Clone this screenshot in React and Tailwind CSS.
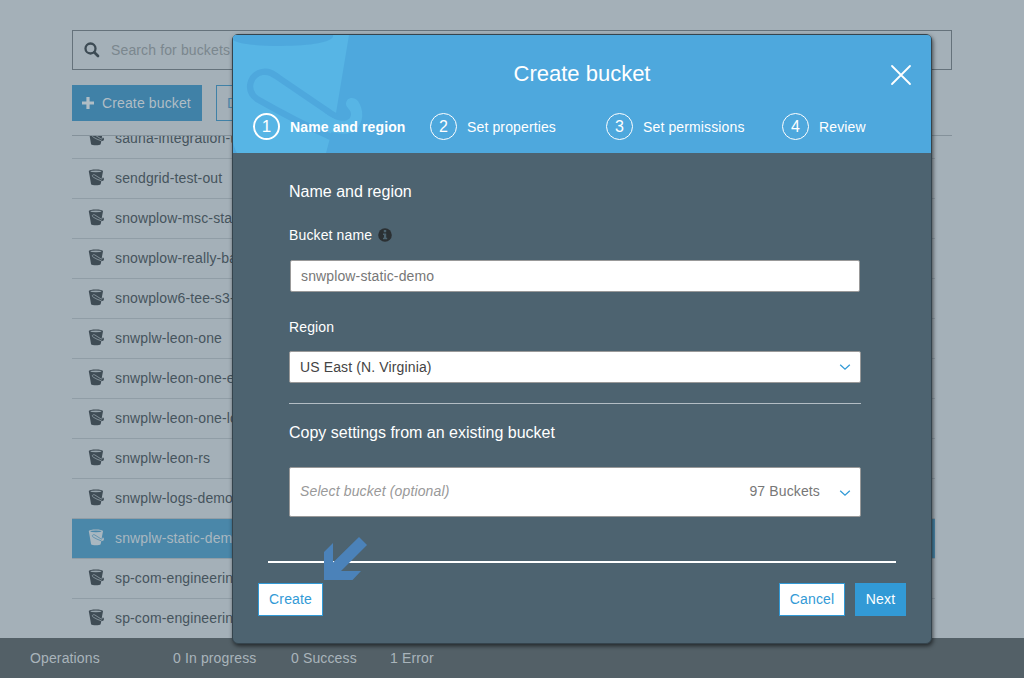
import React from "react";

const buckets = [
  "sauna-integration-test",
  "sendgrid-test-out",
  "snowplow-msc-stage",
  "snowplow-really-basic",
  "snowplow6-tee-s3-out",
  "snwplw-leon-one",
  "snwplw-leon-one-event",
  "snwplw-leon-one-logs",
  "snwplw-leon-rs",
  "snwplw-logs-demo",
  "snwplw-static-demo",
  "sp-com-engineering",
  "sp-com-engineering-a",
];

const steps = ["Name and region", "Set properties", "Set permissions", "Review"];

function BucketIcon({ selected }) {
  const fill = selected ? "#a9b7c0" : "#3f4c55";
  const line = selected ? "#4a87a9" : "#98a5ad";
  return (
    <svg width="17" height="17" viewBox="0 0 17 17" className="shrink-0">
      <path d="M0.8 2.2 C0.8 0 15 0 15 2.2 L13.7 9.3 C14.6 10.1 15 9.2 14.5 8.6 C15.6 8 16.6 10.2 15.5 11.5 C14.9 12.1 14 12 13.4 11.8 L12.6 15.2 C12 16.7 3.8 16.7 3.1 15.2 Z" fill={fill} />
      <ellipse cx="7.9" cy="2.3" rx="5.6" ry="0.85" fill={line} />
      <path d="M13.2 11.8 C10.5 11 7.5 9.5 5.3 8.2 C3.4 6.9 4.8 4.9 6.9 6 L12.2 9.4 C12.9 9.9 13.5 10.2 14 10" fill="none" stroke={line} strokeWidth="0.75" />
    </svg>
  );
}

function Watermark() {
  return (
    <svg width="135" height="118" viewBox="233 35 135 118" className="absolute left-0 top-0">
      <path d="M233 35H349L336 113L330 138L326 153H237Q233 146 233 140Z" fill="#57b5e5" />
      <path d="M233 35H333C335 42 312 46 281 46C256 46 239 44 233 40Z" fill="#4ea8dd" />
      <path d="M331 137C304 125 278 111 257 99C245 90 250 75 262 72C269 71 272 73 279 78L326 110Q331 114 337 117" fill="none" stroke="#4ea8dd" strokeWidth="6.3" />
      <path d="M326 114C336 122 351 124 351 114C351 109 346 108 346 104C346 97 354 96 358 101C364 110 364 122 356 130C348 136 336 134 322 129Z" fill="#57b5e5" />
    </svg>
  );
}

function Chevron() {
  return (
    <svg width="12" height="8" viewBox="0 0 12 8" fill="none" stroke="#329ad6" strokeWidth="1.3">
      <path d="M1.2 1.8L6 6.2L10.8 1.8" />
    </svg>
  );
}

function BucketPage() {
  return (
    <div className="flex h-[678px] flex-col">
      <div className="flex h-[638px] flex-col overflow-hidden pl-[72px] pt-[30px]">
        <div className="flex h-10 w-[880px] shrink-0 items-center border border-[#65727b] pl-[11px] text-[#7b878e]">
          <svg width="16" height="16" viewBox="0 0 16 16" fill="none" stroke="#3d4b54" className="mr-[11px]">
            <circle cx="6.5" cy="6.5" r="5" strokeWidth="2.3" />
            <path d="M10.2 10.2L14 14" strokeWidth="2.7" strokeLinecap="round" />
          </svg>
          Search for buckets
        </div>
        <div className="mt-[15px] flex h-9 shrink-0 gap-[14px]">
          <div className="flex w-[130px] items-center bg-[#4081a7] pl-[10px] text-[#b0bdc5]">
            <svg width="12" height="12" viewBox="0 0 12 12" fill="#b0bdc5" className="mr-2">
              <path d="M4.4 0H7.6V4.4H12V7.6H7.6V12H4.4V7.6H0V4.4H4.4Z" />
            </svg>
            Create bucket
          </div>
          <div className="flex w-[130px] items-center border border-[#4081a7] pl-[10px] text-[#4d86a8]">Delete bucket</div>
        </div>
        <div className="mt-[14px] h-px w-[880px] shrink-0 bg-[#84919a]" />
        <div className="min-h-0 flex-1 overflow-hidden">
          <div className="-mt-[17px]">
            {buckets.map((name) => {
              const selected = name === "snwplw-static-demo";
              return (
                <div
                  key={name}
                  className={
                    "flex h-10 w-[863px] items-center gap-[10px] border-b border-[#909da6] pb-[2px] pl-4 " +
                    (selected ? "bg-[#4a87a9] text-[#a9b7c0]" : "text-[#46545d]")
                  }
                >
                  <BucketIcon selected={selected} />
                  <span className="whitespace-nowrap">{name}</span>
                </div>
              );
            })}
          </div>
        </div>
      </div>
      <div className="flex h-10 items-center bg-[#536067] pl-[30px] text-[#a9b4bb]">
        <span className="w-[143px]">Operations</span>
        <span className="w-[118px]">0 In progress</span>
        <span className="w-[99px]">0 Success</span>
        <span>1 Error</span>
      </div>
    </div>
  );
}

function Header() {
  return (
    <div className="relative h-[118px] overflow-hidden rounded-t-[4px] bg-[#4ea8dd] text-white">
      <Watermark />
      <div className="relative flex h-[76px] items-center justify-center pt-[2px] text-[22px] tracking-normal">
        Create bucket
        <svg width="22" height="22" viewBox="0 0 22 22" stroke="white" strokeWidth="1.8" strokeLinecap="round" className="absolute right-[19px] top-[29px]">
          <path d="M2 2L20 20M20 2L2 20" />
        </svg>
      </div>
      <div className="relative flex h-8 items-center pl-5">
        {steps.map((step, i) => (
          <div key={step} className={"flex shrink-0 items-center gap-[10px] " + (i === 0 ? "w-[177px] font-bold" : "w-[176px]")}>
            <span
              className={
                "mb-px flex size-[27px] shrink-0 items-center justify-center rounded-full border-white pt-px font-normal " +
                (i === 0 ? "border-2 text-[17px]" : "border text-base")
              }
            >
              {i + 1}
            </span>
            <span className="whitespace-nowrap">{step}</span>
          </div>
        ))}
      </div>
    </div>
  );
}

function Dialog() {
  return (
    <div className="absolute left-[232px] top-[34px] h-[610px] w-[700px] rounded-[6px] border border-[#35444d] bg-[#4d6370] shadow-[1px_2px_4px_rgba(0,0,0,0.6)]">
      <Header />
      <div className="pl-14 pr-[70px] pt-[27px] text-white">
        <h2 className="text-base tracking-normal">Name and region</h2>
        <div className="mt-[21px] flex h-5 items-center gap-[6px]">
          Bucket name
          <svg width="14" height="14" viewBox="0 0 14 14">
            <circle cx="7" cy="7" r="6.8" fill="#2b3033" />
            <path d="M5.8 2H8.2V4.2H5.8ZM5 5.5H8.2V9.8H9.2V11.3H5V9.8H6V7H5Z" fill="#4d6370" />
          </svg>
        </div>
        <div className="ml-px mr-px mt-[15px] flex h-8 items-center rounded-[2px] border border-[#999] bg-white pl-[10px] text-[#777]">snwplow-static-demo</div>
        <div className="mt-[25px] h-5 leading-5">Region</div>
        <div className="mt-[14px] flex h-8 items-center justify-between rounded-[2px] border border-[#999] bg-white pl-[10px] pr-[9px] text-[#444]">
          US East (N. Virginia)
          <Chevron />
        </div>
        <div className="mt-5 h-px bg-[#b3bdc4]" />
        <h2 className="mt-[17px] text-base tracking-normal">Copy settings from an existing bucket</h2>
        <div className="mt-[22px] flex h-[50px] items-center rounded-[2px] border border-[#999] bg-white pb-[2px] pl-[10px] pr-[9px] text-[#777]">
          <span className="flex-1 italic text-[#999]">Select bucket (optional)</span>
          <span className="mr-[19px]">97 Buckets</span>
          <span className="mt-[3px]"><Chevron /></span>
        </div>
      </div>
      <div className="ml-[35px] mt-11 h-[2px] w-[628px] bg-white" />
      <div className="mt-5 flex h-[33px] pl-[25px] pr-[25px]">
        <button className="w-[65px] border border-[#329ad6] bg-white pb-[2px] text-[#329ad6]">Create</button>
        <button className="ml-auto w-[66px] border border-[#329ad6] bg-white pb-[2px] text-[#329ad6]">Cancel</button>
        <button className="ml-[10px] w-[51px] bg-[#329ad6] pb-[2px] text-white">Next</button>
      </div>
      <svg width="43" height="43" viewBox="324 537 43 43" className="absolute left-[91px] top-[502px]">
        <path d="M324 580V552L333 543V562.5L359 537L367 545L341 571H361L352.5 580Z" fill="#4b82b9" />
      </svg>
    </div>
  );
}

export default function App() {
  return (
    <div className="relative h-[678px] w-[1024px] overflow-hidden bg-[#a4b0b8] font-['Liberation_Sans',Arial,sans-serif] text-sm tracking-[0.13px]">
      <BucketPage />
      <Dialog />
    </div>
  );
}
